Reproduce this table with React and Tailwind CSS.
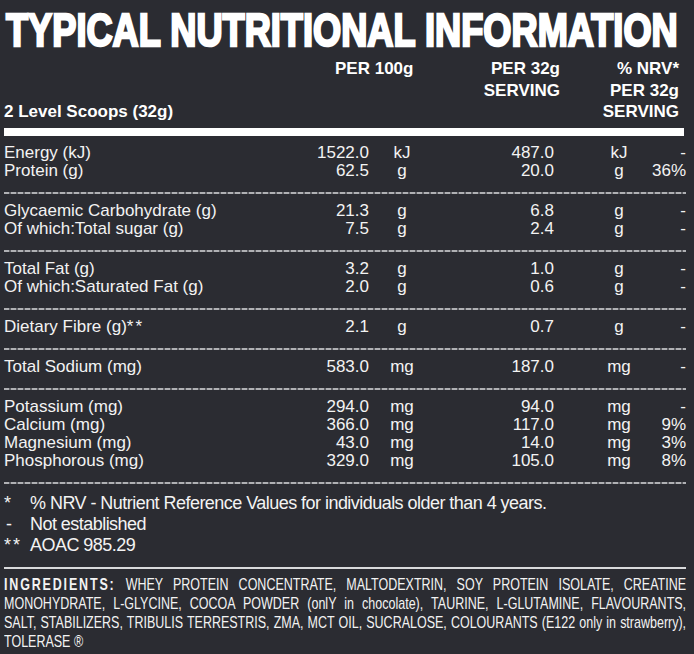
import React from "react";

const sections = [
  [
    ["Energy (kJ)", "1522.0", "kJ", "487.0", "kJ", "-"],
    ["Protein (g)", "62.5", "g", "20.0", "g", "36%"],
  ],
  [
    ["Glycaemic Carbohydrate (g)", "21.3", "g", "6.8", "g", "-"],
    ["Of which:Total sugar (g)", "7.5", "g", "2.4", "g", "-"],
  ],
  [
    ["Total Fat (g)", "3.2", "g", "1.0", "g", "-"],
    ["Of which:Saturated Fat (g)", "2.0", "g", "0.6", "g", "-"],
  ],
  [["Dietary Fibre (g)", "2.1", "g", "0.7", "g", "-", true]],
  [["Total Sodium (mg)", "583.0", "mg", "187.0", "mg", "-"]],
  [
    ["Potassium (mg)", "294.0", "mg", "94.0", "mg", "-"],
    ["Calcium (mg)", "366.0", "mg", "117.0", "mg", "9%"],
    ["Magnesium (mg)", "43.0", "mg", "14.0", "mg", "3%"],
    ["Phosphorous (mg)", "329.0", "mg", "105.0", "mg", "8%"],
  ],
];

function Divider() {
  return (
    <div className="h-[2px] w-full bg-[repeating-linear-gradient(90deg,#b0b1b4_0px,#b0b1b4_5px,#606166_5px,#606166_7px)]" />
  );
}

function Row({ r }) {
  return (
    <div className="grid grid-cols-[296px_69px_66px_119px_40px_50px_42px] text-[17px] leading-[18px]">
      <div>
        {r[0]}
        {r[6] && <span className="tracking-[2px]">**</span>}
      </div>
      <div className="text-right">{r[1]}</div>
      <div className="text-center">{r[2]}</div>
      <div className="text-right">{r[3]}</div>
      <div />
      <div className="text-center">{r[4]}</div>
      <div className="text-right">{r[5]}</div>
    </div>
  );
}

export default function App() {
  return (
    <div className="w-[694px] h-[654px] overflow-hidden bg-[#2b2c32] text-[#f3f3f3] font-['Liberation_Sans',Arial,sans-serif] pl-[4px] pr-[8px]">
      {/* Title */}
      <div className="mt-[7px] h-[46px] whitespace-nowrap">
        <div className="inline-block origin-left scale-x-[0.787] ml-[2px] text-[46px] leading-[46px] font-bold text-white [-webkit-text-stroke:2.5px_white]">
          TYPICAL NUTRITIONAL INFORMATION
        </div>
      </div>

      {/* Header */}
      <div className="mt-[5px] grid grid-cols-[296px_139px_121px_126px] text-[17px] leading-[21.5px] font-bold text-white">
        <div className="pt-[43px]">2 Level Scoops (32g)</div>
        <div className="pl-[35px]">PER 100g</div>
        <div className="text-right">
          <div>PER 32g</div>
          <div>SERVING</div>
        </div>
        <div className="text-right pr-[7px]">
          <div>% NRV*</div>
          <div>PER 32g</div>
          <div>SERVING</div>
        </div>
      </div>

      {/* Thick bar */}
      <div className="mt-[5.5px] h-[8px] w-[680px] bg-white" />

      {/* Data sections */}
      {sections.map((sec, i) => (
        <div key={i}>
          <div className="pt-[8px] pb-[12px]">
            {sec.map((r, j) => (
              <Row key={j} r={r} />
            ))}
          </div>
          <Divider />
        </div>
      ))}

      {/* Footnotes */}
      <div className="pt-[9px] text-[18px] leading-[21px] tracking-[-0.03em]">
        <div className="flex">
          <div className="w-[26px] shrink-0">*</div>
          <div>% NRV - Nutrient Reference Values for individuals older than 4 years.</div>
        </div>
        <div className="flex">
          <div className="w-[26px] shrink-0 pl-[2px]">-</div>
          <div>Not established</div>
        </div>
        <div className="flex">
          <div className="w-[26px] shrink-0 tracking-[2px]">**</div>
          <div>AOAC 985.29</div>
        </div>
      </div>

      <div className="mt-[11px] h-[2px] w-full bg-[#d9dadc]" />

      {/* Ingredients */}
      <div className="pt-[6px] w-[682px] overflow-visible">
        <div className="w-[928px] origin-left scale-x-[0.735] text-[17px] leading-[19px] text-justify [text-align-last:justify]">
          <div className="whitespace-nowrap">
            <span className="font-bold tracking-[2.5px]">INGREDIENTS:</span> WHEY PROTEIN CONCENTRATE, MALTODEXTRIN, SOY PROTEIN ISOLATE, CREATINE
          </div>
          <div className="whitespace-nowrap">
            MONOHYDRATE, L-GLYCINE, COCOA POWDER (onlY in chocolate), TAURINE, L-GLUTAMINE, FLAVOURANTS,
          </div>
          <div className="whitespace-nowrap">
            SALT, STABILIZERS, TRIBULIS TERRESTRIS, ZMA, MCT OIL, SUCRALOSE, COLOURANTS (E122 only in strawberry),
          </div>
          <div className="[text-align-last:left]">TOLERASE ®</div>
        </div>
      </div>
    </div>
  );
}
